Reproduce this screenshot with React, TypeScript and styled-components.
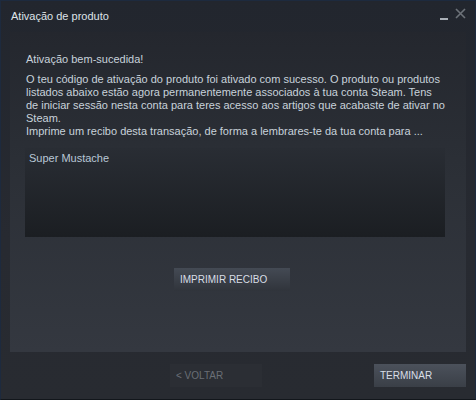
import React from "react";
import styled, { createGlobalStyle } from "styled-components";

const Global = createGlobalStyle`
  html, body { margin: 0; padding: 0; background: #1b1e23; }
  body { font-family: "Liberation Sans", Arial, sans-serif; }
`;

const Window = styled.div`
  width: 476px;
  height: 400px;
  box-sizing: border-box;
  border: 1px solid #1d2a3e;
  border-bottom-color: #12161b;
  background: linear-gradient(180deg, #22262e 0%, #272a31 60%, #282b31 100%);
  display: flex;
  flex-direction: column;
  font-family: "Liberation Sans", Arial, sans-serif;
`;

const TitleBar = styled.div`
  height: 31px;
  display: flex;
  align-items: center;
  padding: 0 9px 0 10px;
  flex-shrink: 0;
`;

const Title = styled.div`
  flex: 1;
  color: #dfe3e8;
  font-size: 11px;
  margin-top: -1px;
`;

const WinButtons = styled.div`
  display: flex;
  align-items: flex-start;
  gap: 6px;
  margin-top: -6px;
`;

const Panel = styled.div`
  margin: 0 9px;
  height: 320px;
  background: linear-gradient(180deg, #24272e 0%, #2b2f36 40%, #343840 100%);
  padding: 21px 15px 0 15px;
  box-sizing: border-box;
  display: flex;
  flex-direction: column;
`;

const Heading = styled.div`
  color: #c8d2db;
  font-size: 11px;
  line-height: 13px;
  margin-bottom: 7px;
  padding-left: 1px;
`;

const Para = styled.div`
  color: #c8d2db;
  font-size: 11px;
  line-height: 13px;
  padding-left: 1px;
  padding-right: 4px;
`;

const ListBox = styled.div`
  margin-top: 10px;
  width: 420px;
  height: 89px;
  box-sizing: border-box;
  background: linear-gradient(180deg, #292d34 0%, #1b1e22 100%);
  padding: 4px 4px;
  color: #b9c7d6;
  font-size: 11px;
  line-height: 13px;
`;

const CenterRow = styled.div`
  display: flex;
  justify-content: center;
  margin-top: 31px;
  padding-right: 12px;
`;

const Button = styled.button<{ $variant?: "primary" | "disabled" }>`
  border: none;
  height: 23px;
  padding: 0 6px;
  font-family: "Liberation Sans", Arial, sans-serif;
  font-size: 10px;
  text-align: left;
  cursor: default;
  background: ${(p) =>
    p.$variant === "disabled"
      ? "#2b2e34"
      : p.$variant === "primary"
      ? "linear-gradient(180deg, #4b515b 0%, #3a3f47 100%)"
      : "linear-gradient(180deg, #444a54 0%, #30343b 100%)"};
  color: ${(p) => (p.$variant === "disabled" ? "#6a6f76" : "#d8dee6")};
`;

const Footer = styled.div`
  flex: 1;
  display: flex;
  align-items: flex-start;
  padding: 12px 9px 0 169px;
`;

const Spacer = styled.div`
  flex: 1;
`;

export default function App() {
  return (
    <>
      <Global />
      <Window>
        <TitleBar>
          <Title>Ativação de produto</Title>
          <WinButtons>
            <svg width="9" height="12" viewBox="0 0 9 12">
              <rect x="0" y="10" width="8" height="2" fill="#a9afb6" />
            </svg>
            <svg width="11" height="11" viewBox="0 0 11 11">
              <path d="M1 1 L10 10 M10 1 L1 10" stroke="#6d7279" strokeWidth="1.6" />
            </svg>
          </WinButtons>
        </TitleBar>
        <Panel>
          <Heading>Ativação bem-sucedida!</Heading>
          <Para>
            O teu código de ativação do produto foi ativado com sucesso. O produto ou produtos listados abaixo estão agora permanentemente associados à tua conta Steam. Tens de iniciar sessão nesta conta para teres acesso aos artigos que acabaste de ativar no Steam.
            <br />
            Imprime um recibo desta transação, de forma a lembrares-te da tua conta para ...
          </Para>
          <ListBox>Super Mustache</ListBox>
          <CenterRow>
            <Button style={{ width: 116 }}>IMPRIMIR RECIBO</Button>
          </CenterRow>
        </Panel>
        <Footer>
          <Button $variant="disabled" style={{ width: 92 }}>&lt; VOLTAR</Button>
          <Spacer />
          <Button $variant="primary" style={{ width: 92 }}>TERMINAR</Button>
        </Footer>
      </Window>
    </>
  );
}
